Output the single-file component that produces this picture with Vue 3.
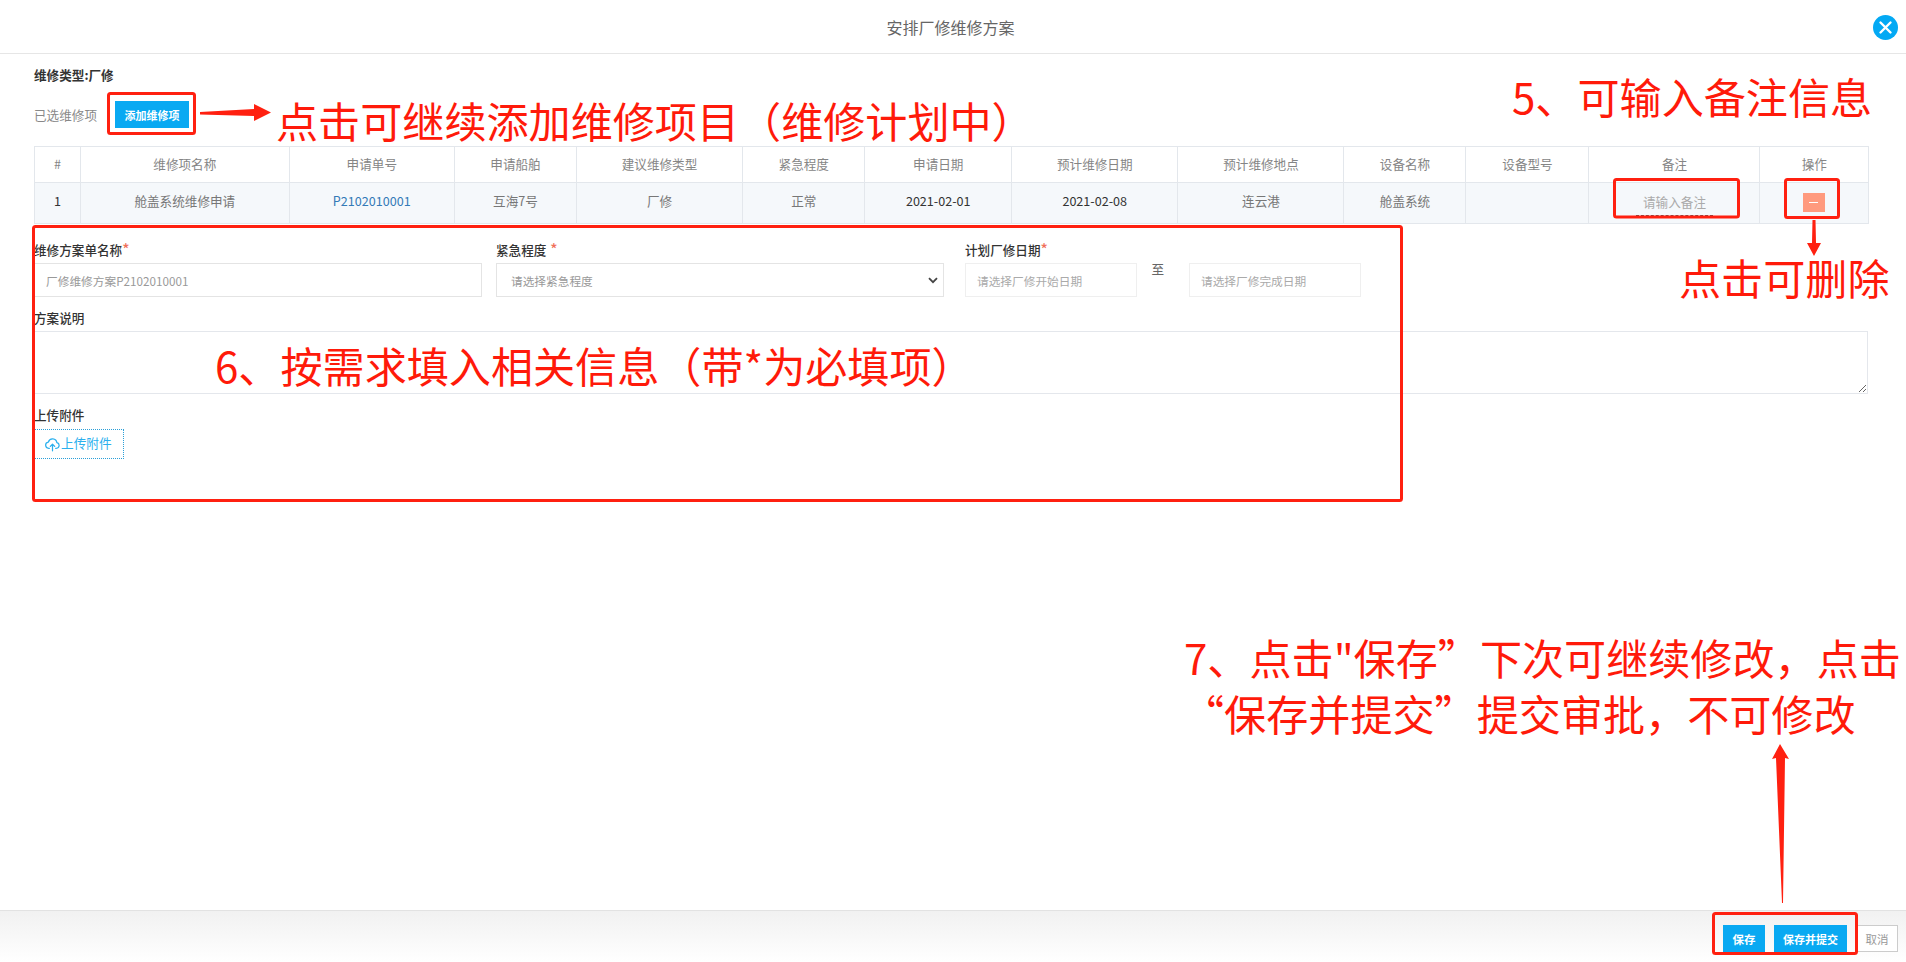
<script setup>
const columns = [
  { title: '#', width: 46 }, { title: '维修项名称', width: 208.6 }, { title: '申请单号', width: 165.4 },
  { title: '申请船舶', width: 122 }, { title: '建议维修类型', width: 166 }, { title: '紧急程度', width: 122.5 },
  { title: '申请日期', width: 146.5 }, { title: '预计维修日期', width: 166.5 }, { title: '预计维修地点', width: 166 },
  { title: '设备名称', width: 122 }, { title: '设备型号', width: 123 }, { title: '备注', width: 171 }, { title: '操作', width: 108.5 }
]
const boxes = [
  { x: 108.5, y: 93.5, w: 86, h: 40 }, { x: 1614.5, y: 179.5, w: 124, h: 37.5 },
  { x: 1785.5, y: 179.5, w: 53, h: 38 }, { x: 33.5, y: 226.5, w: 1368, h: 274 },
  { x: 1713.5, y: 913.5, w: 143, h: 40 }
]
const notes = [
  { text: '点击可继续添加维修项目（维修计划中）', cls: 'n1' },
  { text: '5、可输入备注信息', cls: 'n2' },
  { text: '点击可删除', cls: 'n3' },
  { text: '6、按需求填入相关信息（带*为必填项）', cls: 'n4' },
  { text: '7、点击"保存”下次可继续修改，点击', cls: 'n5' },
  { text: '“保存并提交”提交审批，不可修改', cls: 'n6' }
]
</script>

<template>
  <div class="page">
    <header class="head">
      <span class="title">安排厂修维修方案</span>
      <button class="close" aria-label="关闭">
        <svg width="25" height="25" viewBox="0 0 25 25"><circle cx="12.5" cy="12.5" r="12.5" fill="#03a9f4"/><path d="M7.5 7.5l10 10M17.5 7.5l-10 10" stroke="#fff" stroke-width="2.4" stroke-linecap="round"/></svg>
      </button>
    </header>

    <main class="main">
      <div class="type">维修类型:厂修</div>
      <div class="tools">
        <span class="picked">已选维修项</span>
        <button class="btn add">添加维修项</button>
      </div>

      <table class="grid">
        <colgroup><col v-for="c in columns" :key="c.title" :style="{ width: c.width + 'px' }"></colgroup>
        <thead><tr><th v-for="c in columns" :key="c.title">{{ c.title }}</th></tr></thead>
        <tbody>
          <tr>
            <td class="dark">1</td>
            <td>舱盖系统维修申请</td>
            <td><a class="link">P2102010001</a></td>
            <td>互海7号</td>
            <td>厂修</td>
            <td>正常</td>
            <td class="dark">2021-02-01</td>
            <td class="dark">2021-02-08</td>
            <td>连云港</td>
            <td>舱盖系统</td>
            <td></td>
            <td class="ctlcell"><input class="remark" placeholder="请输入备注"></td>
            <td class="ctlcell"><button class="minus" aria-label="删除"><i></i></button></td>
          </tr>
        </tbody>
      </table>

      <form class="form" @submit.prevent>
        <div class="row">
          <div class="field wide">
            <label>维修方案单名称<em>*</em></label>
            <input class="ctl" value="厂修维修方案P2102010001">
          </div>
          <div class="field wide">
            <label>紧急程度<em class="gap">*</em></label>
            <div class="selwrap">
              <select class="ctl sel"><option>请选择紧急程度</option></select>
              <svg class="chev" width="10" height="7" viewBox="0 0 10 7"><path d="M1 1.2l4 4 4-4" fill="none" stroke="#444" stroke-width="1.8"/></svg>
            </div>
          </div>
          <div class="field">
            <label>计划厂修日期<em>*</em></label>
            <div class="dates">
              <input class="ctl date" placeholder="请选择厂修开始日期">
              <span class="to">至</span>
              <input class="ctl date" placeholder="请选择厂修完成日期">
            </div>
          </div>
        </div>
        <label class="block">方案说明</label>
        <textarea class="area"></textarea>
        <label class="block up">上传附件</label>
        <button class="upload" type="button">
          <svg width="15" height="15" viewBox="0 0 24 24" fill="none" stroke="#2bb0ee" stroke-width="2" stroke-linecap="round" stroke-linejoin="round"><path d="M7 18H6a5 5 0 0 1-.6-9.96A7 7 0 0 1 19 9.1 4.5 4.5 0 0 1 18 18h-1"/><path d="M12 22v-10M8.5 15l3.5-3.5 3.5 3.5"/></svg>
          <span>上传附件</span>
        </button>
      </form>
    </main>

    <footer class="foot">
      <button class="btn act save">保存</button>
      <button class="btn act submit">保存并提交</button>
      <button class="btn cancel">取消</button>
    </footer>

    <svg class="marks" width="1906" height="962" viewBox="0 0 1906 962">
      <rect v-for="(b, i) in boxes" :key="i" :x="b.x" :y="b.y" :width="b.w" :height="b.h" rx="2" fill="none" stroke="#ff2010" stroke-width="3"/>
      <path d="M200 112L254 109V104L271 112.5L254 121V116L200 114.5Z" fill="#ff2010"/>
      <path d="M1812.5 220H1815.5L1816 243L1821 243L1814 256L1807 243L1812 243Z" fill="#ff2010"/>
      <path d="M1780 744L1789 759L1785 758L1783 903H1782L1776 758L1772 759Z" fill="#ff2010"/>
    </svg>
    <div v-for="n in notes" :key="n.cls" class="note" :class="n.cls">{{ n.text }}</div>
  </div>
</template>

<style>
html, body { margin: 0; padding: 0; background: #fff; }
</style>

<style scoped>
.page {
  position: relative;
  width: 1906px;
  height: 962px;
  overflow: hidden;
  display: flex;
  flex-direction: column;
  font-family: "Noto Sans CJK SC", "Liberation Sans", sans-serif;
  font-size: 12.6px;
  color: #777;
  background: #fff;
}
.head {
  height: 53px;
  flex: none;
  border-bottom: 1.5px solid #e6e6e6;
  display: flex;
  align-items: center;
  justify-content: center;
  padding-right: 5px;
  position: relative;
}
.title { font-size: 16px; color: #666; }
.close {
  position: absolute;
  right: 8.5px;
  top: 15px;
  width: 25px;
  height: 25px;
  padding: 0;
  border: 0;
  background: none;
}
.main {
  flex: 1;
  padding: 12px 38px 0 34px;
  min-height: 0;
}
.type { line-height: 18px; font-weight: 700; color: #333; }
.tools { margin-top: 17px; display: flex; align-items: center; height: 27px; }
.picked { width: 81px; color: #888; }
.btn {
  border: 0;
  padding: 0;
  font-family: inherit;
  font-size: 11px;
  font-weight: 700;
  color: #fff;
  background: #09a9f2;
}
.add { width: 74px; height: 27px; }
.grid {
  margin-top: 18px;
  width: 1834px;
  table-layout: fixed;
  border-collapse: collapse;
}
.grid th, .grid td {
  box-sizing: border-box;
  border: 1px solid #e3e7ec;
  padding: 0;
  text-align: center;
  font-weight: 400;
}
.grid th { height: 36px; padding-bottom: 2px; color: #858585; background: #fff; }
.grid td { height: 41px; padding-bottom: 5px; color: #777; background: #f5f8fb; }
.grid td.dark { color: #333; }
.grid td.ctlcell { padding-bottom: 0; }
.link { color: #337ab7; }
.remark {
  display: block;
  width: 77px;
  height: 26px;
  margin: 0 auto;
  box-sizing: border-box;
  padding: 0 0 2px;
  border: 0;
  border-bottom: 1px dashed #555;
  background: transparent;
  text-align: center;
  font: inherit;
  outline: 0;
}
.remark::placeholder { color: #aaa; }
.minus {
  display: block;
  margin: 0 0 2px 42.5px;
  width: 22px;
  height: 19px;
  padding: 0;
  border: 0;
  background: #ff9a7e;
  position: relative;
}
.minus i {
  position: absolute;
  left: 6.5px;
  top: 9px;
  width: 9px;
  height: 1.5px;
  background: #fff;
}
.form { margin-top: 17px; }
.row { display: flex; }
.field { display: flex; flex-direction: column; }
.field.wide { width: 447.6px; margin-right: 14.4px; }
.field.wide + .field.wide { margin-right: 21.4px; }
label { display: block; line-height: 18px; color: #333; font-weight: 500; }
label em { font-style: normal; color: #f0705a; font-size: 15px; line-height: 0; }
label em.gap { margin-left: 4px; }
.ctl {
  box-sizing: border-box;
  height: 34px;
  margin-top: 4px;
  border: 1px solid #e4e4e4;
  border-radius: 0;
  outline: 0;
  background: #fff;
  font-family: inherit;
  font-size: 11.7px;
  color: #999;
  padding: 0 0 0 11px;
}
.ctl::placeholder { color: #aaa; }
.selwrap { position: relative; display: flex; }
.sel { padding-left: 14px; width: 100%; appearance: none; }
.chev { position: absolute; right: 6px; top: 18px; pointer-events: none; }
.dates { display: flex; }
.date { width: 172.5px; border-color: #efefef; }
.to { width: 51.5px; margin-top: 1px; padding-left: 14px; box-sizing: border-box; line-height: 18px; color: #666; }
.block { margin-top: 12px; }
.block.up { margin-top: 12px; }
.area {
  display: block;
  box-sizing: border-box;
  width: 1834px;
  height: 63px;
  margin-top: 4px;
  border: 1px solid #e4e7ec;
  outline: 0;
  font: inherit;
}
.upload {
  margin-top: 5px;
  box-sizing: border-box;
  width: 90px;
  height: 30px;
  padding: 0 0 0 10px;
  display: flex;
  align-items: center;
  gap: 1px;
  border: 1px dotted #2b9fd8;
  background: #fff;
  font: inherit;
  font-size: 12.7px;
  color: #2bb0ee;
}
.upload span { padding-bottom: 3px; }
.foot {
  flex: none;
  height: 52px;
  box-sizing: border-box;
  border-top: 1.5px solid #e2e2e2;
  background: linear-gradient(#f1f1f1, #fff);
  display: flex;
  align-items: flex-start;
  padding: 14px 8px 0 0;
  justify-content: flex-end;
}
.act { height: 27px; }
.save { width: 42px; font-size: 11.5px; }
.submit { width: 73px; margin-left: 9px; margin-right: 9px; }
.cancel {
  box-sizing: border-box;
  width: 42px;
  height: 27px;
  background: #fff;
  border: 1px solid #ccc;
  color: #999;
  font-weight: 400;
  font-size: 11.5px;
}
.marks { position: absolute; left: 0; top: 0; pointer-events: none; }
.note {
  position: absolute;
  font-size: 42.1px;
  line-height: 54px;
  color: #ff1a0a;
  white-space: nowrap;
  pointer-events: none;
}
.n1 { left: 276px; top: 93px; }
.n2 { left: 1512px; top: 69px; }
.n3 { left: 1679px; top: 250px; }
.n4 { left: 215px; top: 338px; }
.n5 { left: 1184px; top: 630px; }
.n6 { left: 1182px; top: 686px; }
</style>
